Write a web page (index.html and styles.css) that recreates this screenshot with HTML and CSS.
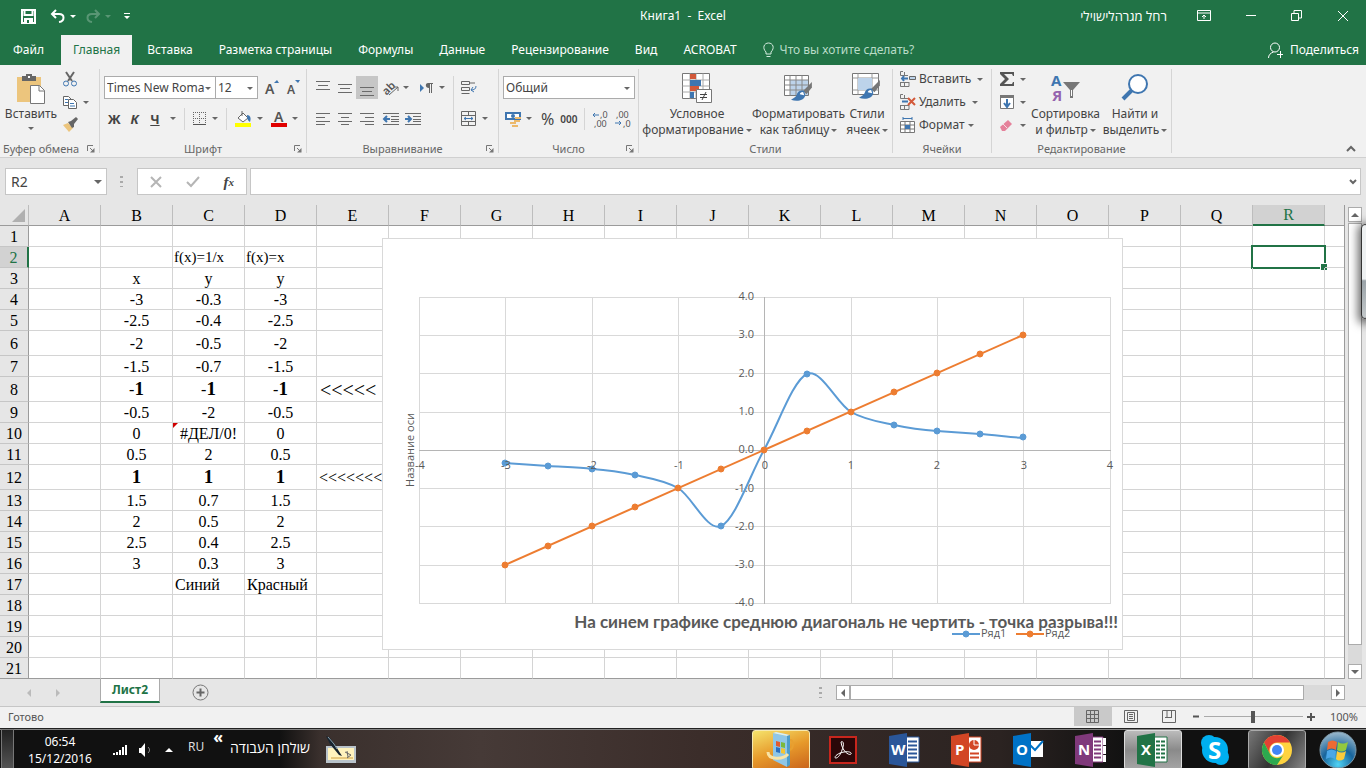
FILE: index.html
```html
<!DOCTYPE html>
<html lang="ru">
<head>
<meta charset="utf-8">
<title>Книга1 - Excel</title>
<link rel="stylesheet" href="styles.css">
</head>
<body>
<svg width="0" height="0" class="defs" aria-hidden="true">
  <symbol id="launch" viewBox="0 0 8 8"><path d="M.5 6V.5H6M3 3l3 3" stroke="#777" fill="none"/><path d="M7.500 3v4.500H3z" fill="#777"/></symbol>
  <symbol id="brush" viewBox="0 0 20 18"><path d="M19 0l-8 8 3 3 5-6z" fill="#777"/><path d="M12 8c-4-1-6 1-7 4-1 2-3 3-5 4 5 2 12 1 13-4z" fill="#3f76b0"/><path d="M11 9c-2 0-3 1-3 2l4 1z" fill="#fff"/></symbol>
  <symbol id="cells" viewBox="0 0 10 16"><path d="M3 .5H.5v4H8M.5 11v4.500H9V11M.5 11.500H9M4.500 11v4M4.500 1v3" stroke="#777" fill="none"/></symbol>
</svg>

<header class="titlebar">
  <div class="quick">
    <button aria-label="Сохранить"><svg width="15" height="15"><path d="M1 1h13v13H1zM3.500 1v5h8V1M4 14v-4h7v4" fill="none" stroke="#fff" stroke-width="2"/><path d="M4 10h7v4H4z" fill="#fff"/><path d="M6 11h2v3H6z" fill="#217346"/></svg></button>
    <button class="split" aria-label="Отменить"><svg width="16" height="14"><path d="M6 1L2 5l4 4M2 5h7c6 0 6 7 0 8" fill="none" stroke="#fff" stroke-width="2"/></svg><i class="caret"></i></button>
    <button class="split dim" aria-label="Вернуть"><svg width="16" height="14"><path d="M10 1l4 4-4 4M14 5H7c-6 0-6 7 0 8" fill="none" stroke="#fff" stroke-width="2"/></svg><i class="caret"></i></button>
    <button aria-label="Настройка панели"><svg width="6" height="7"><path d="M0 0h6v1H0zM0 3h6L3 6z" fill="#fff"/></svg></button>
  </div>
  <h1>Книга1&nbsp; -&nbsp; Excel</h1>
  <div class="window">
    <span class="user" dir="rtl">רחל מגרהלישוילי</span>
    <button aria-label="Параметры ленты"><svg width="14" height="12"><path d="M.5.5h13v10H.5zM.5 3h13M7 9V5M5 7l2-2 2 2" fill="none" stroke="#fff"/></svg></button>
    <button aria-label="Свернуть"><svg width="12" height="12"><path d="M1 5.500h10" stroke="#fff"/></svg></button>
    <button aria-label="Восстановить"><svg width="12" height="12"><path d="M.5 3.500h7v7h-7zM3 3V.5h7.500V8H8" fill="none" stroke="#fff"/></svg></button>
    <button aria-label="Закрыть"><svg width="12" height="12"><path d="M1 1l10 10M11 1L1 11" stroke="#fff"/></svg></button>
  </div>
</header>

<nav class="tabs">
  <button>Файл</button><button class="active">Главная</button><button>Вставка</button><button>Разметка страницы</button><button>Формулы</button><button>Данные</button><button>Рецензирование</button><button>Вид</button><button>ACROBAT</button>
  <button class="tell"><svg width="11" height="16"><path d="M3 10C-1 6 1 1 5.500 1S12 6 8 10v2H3zM3.500 14.500h4" fill="none" stroke="#d5ecdf"/></svg>Что вы хотите сделать?</button>
  <button class="share"><svg width="16" height="17"><circle cx="7" cy="5.500" r="4.500" fill="none" stroke="#fff"/><path d="M.5 16c0-3 2-5 5-6M9 12.500h6M12.500 9v7" fill="none" stroke="#fff"/></svg>Поделиться</button>
</nav>

<section class="ribbon">
  <div class="group g-clip">
    <div class="body">
      <button class="big paste"><svg width="30" height="31"><path d="M1 4h24v25H1z" fill="#ecc57d"/><path d="M6 3h4V1h6v2h4v5H6z" fill="#666"/><path d="M12 3h2v2h-2z" fill="#fff"/><path d="M14.500 12.500h9l5 5v13h-14z" fill="#fff" stroke="#777"/><path d="M23 12.500V18h5.500" fill="none" stroke="#777"/></svg><span>Вставить</span><i class="caret"></i></button>
      <div class="stack">
        <button aria-label="Вырезать"><svg width="16" height="16"><path d="M4 1l6 9M12 1L6 10" stroke="#666" stroke-width="2"/><circle cx="4" cy="12.500" r="2.500" fill="none" stroke="#3f76b0"/><circle cx="12" cy="12.500" r="2.500" fill="none" stroke="#3f76b0"/></svg></button>
        <button aria-label="Копировать"><svg width="16" height="16"><path d="M1.500 2.500h5l3 3v6h-8z" fill="#fff" stroke="#666"/><path d="M6.500 5.500h5l3 3v6h-8z" fill="#fff" stroke="#666"/><path d="M3 5.500h3M3 8.500h3M8 9.500h4M8 12h5" stroke="#3f76b0"/></svg><i class="caret"></i></button>
        <button aria-label="Формат по образцу"><svg width="16" height="16"><path d="M1 8l5-2 5 5-4 4z" fill="#ecc57d"/><path d="M6 5l3-1 5-4 2 2-4 5v3l-2 1z" fill="#666"/></svg></button>
      </div>
    </div>
    <footer>Буфер обмена<svg class="launch"><use href="#launch"/></svg></footer>
  </div>

  <div class="group g-font">
    <div class="body rows">
      <div class="row">
        <label class="pick font"><select aria-label="Шрифт"><option>Times New Roma</option></select></label><label class="pick size"><select aria-label="Размер"><option>12</option></select></label>
        <button class="grow" aria-label="Увеличить размер"><svg width="15" height="20"><text x="0" y="16" class="glyph g14">A</text><path d="M9 5h5l-2-3z" fill="#3f76b0"/></svg></button>
        <button class="grow" aria-label="Уменьшить размер"><svg width="15" height="20"><text x="0" y="16" class="glyph g12">A</text><path d="M8 2h5l-2 3z" fill="#3f76b0"/></svg></button>
      </div>
      <div class="row second">
        <button class="letter b">Ж</button><button class="letter i">К</button><button class="letter u">Ч</button><i class="caret"></i><i class="rule"></i>
        <button aria-label="Границы"><svg width="14" height="14"><path d="M.5 0v13M6.500 0v13M12.500 0v13M0 .5h13M0 6.500h13" stroke="#666" stroke-dasharray="1 1"/><path d="M0 12.500h13" stroke="#555"/></svg></button><i class="caret"></i><i class="rule"></i>
        <button aria-label="Цвет заливки"><svg width="17" height="16"><path d="M3 7l5-5 5 5-5 4zM7 5V0" fill="#fff" stroke="#666"/><path d="M12 4c4 0 4 4 3 7-2-1-3-3-3-7" fill="#3f76b0"/><path d="M0 12h16v4H0z" fill="#ff0"/></svg></button><i class="caret"></i>
        <button aria-label="Цвет текста"><svg width="16" height="20"><text x="3" y="13" class="glyph g14">A</text><path d="M0 14h16v4H0z" fill="#e00000"/></svg></button><i class="caret"></i>
      </div>
    </div>
    <footer>Шрифт<svg class="launch"><use href="#launch"/></svg></footer>
  </div>

  <div class="group g-align">
    <div class="body">
      <div class="rows">
        <div class="row">
          <button class="al" aria-label="По верхнему краю"><svg width="16" height="16"><path d="M1 1.500h14M3 5.500h10M1 9.500h14" stroke="#6a6a6a"/></svg></button>
          <button class="al" aria-label="По середине"><svg width="16" height="16"><path d="M1 4.500h14M3 8.500h10M1 12.500h14" stroke="#6a6a6a"/></svg></button>
          <button class="al on" aria-label="По нижнему краю"><svg width="16" height="16"><path d="M1 7.500h14M3 11.500h10M1 15.500h14" stroke="#6a6a6a"/></svg></button>
          <button class="al far" aria-label="Ориентация"><svg width="17" height="16"><text x="0" y="13" class="glyph g11" transform="rotate(-45 5 10)">ab</text><path d="M6 15l9-8M11 7h4v4" fill="none" stroke="#666"/></svg></button><i class="caret"></i>
          <button class="al far" aria-label="Направление"><svg width="14" height="14"><path d="M0 3l4 4-4 4z" fill="#3f76b0"/><path d="M8 2h5v1h-1v9h-1V3h-1v9H9V7C5 7 5 2 8 2" fill="#666"/></svg></button><i class="caret"></i>
        </div>
        <div class="row second">
          <button class="al" aria-label="По левому краю"><svg width="16" height="14"><path d="M1 1.500h14M1 5.500h9M1 9.500h14M1 12.500h9" stroke="#6a6a6a"/></svg></button>
          <button class="al" aria-label="По центру"><svg width="16" height="14"><path d="M1 1.500h14M4 5.500h8M1 9.500h14M4 12.500h8" stroke="#6a6a6a"/></svg></button>
          <button class="al" aria-label="По правому краю"><svg width="16" height="14"><path d="M1 1.500h14M6 5.500h9M1 9.500h14M6 12.500h9" stroke="#6a6a6a"/></svg></button>
          <button class="al far" aria-label="Уменьшить отступ"><svg width="17" height="14"><path d="M0 1.500h16M8 4.500h8M8 7.500h8M8 9.500h8M0 12.500h16" stroke="#6a6a6a"/><path d="M7 7H1M4 4L1 7l3 3" fill="none" stroke="#3f76b0" stroke-width="2"/></svg></button>
          <button class="al" aria-label="Увеличить отступ"><svg width="17" height="14"><path d="M0 1.500h16M8 4.500h8M8 7.500h8M8 9.500h8M0 12.500h16" stroke="#6a6a6a"/><path d="M0 7h6M3 4l3 3-3 3" fill="none" stroke="#3f76b0" stroke-width="2"/></svg></button>
        </div>
      </div>
      <i class="rule tall"></i>
      <div class="rows">
        <div class="row"><button aria-label="Перенести текст"><svg width="17" height="16"><path d="M.5 1.500h8v3h-8zM8 3h6M.5 7.500h8v3h-8zM.5 13.500h8" fill="none" stroke="#666"/><path d="M15 6c0 3-2 4-5 4M12 7l-2 3 3 2" fill="none" stroke="#3f76b0"/></svg></button></div>
        <div class="row second"><button aria-label="Объединить"><svg width="16" height="16"><path d="M.5.5h14v14H.5zM.5 4.500h14M.5 10.500h14M7.500.5v4M7.500 10.500v4" fill="none" stroke="#666"/><path d="M3 7.500h9M5 6L3 7.500 5 9M10 6l2 1.500L10 9" fill="none" stroke="#3f76b0"/></svg></button><i class="caret"></i></div>
      </div>
    </div>
    <footer>Выравнивание<svg class="launch"><use href="#launch"/></svg></footer>
  </div>

  <div class="group g-num">
    <div class="body rows">
      <div class="row"><label class="pick num"><select aria-label="Формат числа"><option>Общий</option></select></label></div>
      <div class="row second">
        <button class="money" aria-label="Финансовый формат"><svg width="17" height="16"><path d="M0 1h16v8H0z" fill="#3f76b0"/><path d="M2 3h12v4H2z" fill="#fff"/><circle cx="8" cy="5" r="2" fill="#3f76b0"/><path d="M10 6h6v2h-6zM9 9h6v2H9zM5 11h6v2H5zM7 14h6v2H7z" fill="#ecb96b"/></svg></button><i class="caret"></i>
        <button class="pct">%</button><button class="thou">000</button><i class="rule"></i>
        <button aria-label="Увеличить разрядность"><svg width="16" height="20"><text x="8" y="9" class="glyph g9">,0</text><text x="2" y="18" class="glyph g9">,00</text><path d="M7 6H1M3 4L1 6l2 2" fill="none" stroke="#3f76b0"/></svg></button>
        <button aria-label="Уменьшить разрядность"><svg width="16" height="20"><text x="1" y="9" class="glyph g9">,00</text><text x="8" y="18" class="glyph g9">,0</text><path d="M0 14h6M4 12l2 2-2 2" fill="none" stroke="#3f76b0"/></svg></button>
      </div>
    </div>
    <footer>Число<svg class="launch"><use href="#launch"/></svg></footer>
  </div>

  <div class="group g-style">
    <div class="body">
      <button class="big wide"><svg width="30" height="31"><path d="M.5.500h27v25H.5z" fill="#fff" stroke="#777"/><path d="M.5 7h27M.5 13h27M.5 19h27M8 .5v25M14 .5v25M21 .5v25" stroke="#aaa"/><path d="M8 1h6v5H8zM8 13h9v5H8z" fill="#d3593a"/><path d="M8 7h11v6H8zM8 19h4v6H8z" fill="#3f76b0"/><path d="M14.500 16.500h15v13h-15z" fill="#fff" stroke="#777"/><path d="M18 21.500h7M18 24.500h7M24 19l-4 8" stroke="#444"/></svg><span>Условное<br>форматирование<i class="caret"></i></span></button>
      <button class="big mid"><svg width="30" height="31"><path d="M.5 2.500h24v20H.5z" fill="#fff" stroke="#777"/><path d="M6 7h18v15H6z" fill="#bdd3ea"/><path d="M.5 7h24M.5 12h24M.5 17h24M6 2.500v20M12 2.500v20M18 2.500v20" stroke="#888"/><use href="#brush" x="7" y="9" width="22" height="20"/></svg><span>Форматировать<br>как таблицу<i class="caret"></i></span></button>
      <button class="big thin"><svg width="30" height="31"><path d="M.5.500h26v21H.5z" fill="#fff" stroke="#777"/><path d="M.5 5h26M.5 17h26M6 .5v21M20 .5v21" stroke="#999"/><path d="M6 5h14v12H6z" fill="#bdd3ea"/><use href="#brush" x="7" y="7" width="22" height="20"/></svg><span>Стили<br>ячеек<i class="caret"></i></span></button>
    </div>
    <footer>Стили</footer>
  </div>

  <div class="group g-cells">
    <div class="body stack">
      <button><svg width="16" height="16"><use href="#cells" width="10" height="16"/><path d="M9.500 5.500h6v3h-6z" fill="#bdd3ea" stroke="#666"/><path d="M8 7.500H2M4 5L2 7.500 4 10" fill="none" stroke="#3f76b0" stroke-width="2"/></svg>Вставить<i class="caret gap"></i></button>
      <button><svg width="16" height="16"><use href="#cells" width="10" height="16"/><path d="M2 7.500h6" stroke="#3f76b0" stroke-width="2"/><path d="M8 4l7 7M15 4l-7 7" stroke="#d3593a" stroke-width="2"/></svg>Удалить<i class="caret gap"></i></button>
      <button><svg width="16" height="16"><path d="M.5 4.500h14v11H.5zM.5 8h14M.5 12h14M5 5v10M10 5v10" fill="#fff" stroke="#777"/><path d="M5 8h5v4H5z" fill="#3f76b0"/><path d="M3 1.500h9M3 0v3M12 0v3" stroke="#3f76b0"/></svg>Формат<i class="caret"></i></button>
    </div>
    <footer>Ячейки</footer>
  </div>

  <div class="group g-edit">
    <div class="body">
      <div class="stack">
        <button aria-label="Сумма"><svg width="16" height="16"><path d="M1 1h14v4h-1l-1-2H5l5 5-5 5h8l1-2h1v4H1v-2l5-5-5-5z" fill="#555"/></svg><i class="caret"></i></button>
        <button aria-label="Заполнить"><svg width="16" height="16"><path d="M1.500 1.500h13v13h-13z" fill="#fff" stroke="#777"/><path d="M1 1h14v3H1z" fill="#777"/><path d="M8 5v8M5 9l3 4 3-4" fill="none" stroke="#3f76b0" stroke-width="2"/></svg><i class="caret"></i></button>
        <button aria-label="Очистить"><svg width="16" height="16"><path d="M1 10l8-7 4 4-7 7-3 0z" fill="#e5829b"/><path d="M4 7l4 4" stroke="#f5dde4"/></svg><i class="caret"></i></button>
      </div>
      <button class="big sort"><svg width="30" height="31"><text x="0" y="13" class="glyph az blue">А</text><text x="1" y="28" class="glyph az violet">Я</text><path d="M12 9h17l-7 8v8h-3v-8z" fill="#777"/><path d="M20 17h1v6h-1z" fill="#fff"/></svg><span>Сортировка<br>и фильтр<i class="caret"></i></span></button>
      <button class="big find"><svg width="30" height="31"><path d="M12 17l-9 9" stroke="#3f76b0" stroke-width="4"/><circle cx="18" cy="11" r="9" fill="#fff" stroke="#3f76b0" stroke-width="2"/></svg><span>Найти и<br>выделить<i class="caret"></i></span></button>
    </div>
    <footer>Редактирование</footer>
  </div>
  <button class="collapse" aria-label="Свернуть ленту"><svg width="10" height="7"><path d="M1 6l4-4 4 4" fill="none" stroke="#666" stroke-width="2"/></svg></button>
</section>

<section class="formula">
  <label class="pick name"><select aria-label="Имя"><option>R2</option></select></label>
  <span class="dots"></span>
  <div class="fx">
    <button aria-label="Отмена"><svg width="12" height="12"><path d="M1 1l10 10M11 1L1 11" stroke="#b5b5b5" stroke-width="2"/></svg></button>
    <button aria-label="Ввод"><svg width="14" height="12"><path d="M1 6l4 4 8-9" fill="none" stroke="#b5b5b5" stroke-width="2"/></svg></button>
    <button class="fn">f<sub>x</sub></button>
  </div>
  <div class="entry"><input type="text" aria-label="Строка формул"><svg width="10" height="8"><path d="M2 2l3 3 3-3" fill="none" stroke="#666" stroke-width="2"/></svg></div>
</section>

<main class="sheet">
  <div class="gridwrap">
    <table id="grid"></table>
    <svg class="chart" width="741" height="412" viewBox="0 0 741 412">
      <g class="lines" shape-rendering="crispEdges">
        <path d="M37 59H729M37 97H729M37 135H729M37 174H729M37 250H729M37 288H729M37 327H729M37 365H729M37 59V366M123 59V366M210 59V366M296 59V366M469 59V366M555 59V366M641 59V366M728 59V366"/>
        <path class="axis" d="M37 212H729M382 59V366"/>
      </g>
      <path class="blue-line" d="M123 225C137 226 152 227 166 228C180 229 196 229 210 231C224 232 239 234 253 237C267 240 282 242 296 250C310 258 325 294 339 288C353 282 368 237 382 212C396 187 411 142 425 136C439 130 455 166 469 174C483 182 498 184 512 187C526 190 541 192 555 193S584 195 598 196S627 199 641 200"/>
      <g class="blue-dot"><circle cx="123" cy="225" r="3"/><circle cx="166" cy="228" r="3"/><circle cx="210" cy="231" r="3"/><circle cx="253" cy="237" r="3"/><circle cx="339" cy="288" r="3"/><circle cx="425" cy="136" r="3"/><circle cx="512" cy="187" r="3"/><circle cx="555" cy="193" r="3"/><circle cx="598" cy="196" r="3"/><circle cx="641" cy="199" r="3"/></g>
      <path class="orange-line" d="M123 327L641 97"/>
      <g class="orange-dot"><circle cx="123" cy="327" r="3"/><circle cx="166" cy="308" r="3"/><circle cx="210" cy="288" r="3"/><circle cx="253" cy="269" r="3"/><circle cx="296" cy="250" r="3"/><circle cx="339" cy="231" r="3"/><circle cx="382" cy="212" r="3"/><circle cx="425" cy="193" r="3"/><circle cx="469" cy="174" r="3"/><circle cx="512" cy="154" r="3"/><circle cx="555" cy="135" r="3"/><circle cx="598" cy="116" r="3"/><circle cx="641" cy="97" r="3"/></g>
      <g class="tick end"><text x="372" y="62">4.0</text><text x="372" y="100">3.0</text><text x="372" y="139">2.0</text><text x="372" y="177">1.0</text><text x="372" y="215">0.0</text><text x="372" y="254">-1.0</text><text x="372" y="292">-2.0</text><text x="372" y="330">-3.0</text><text x="372" y="368">-4.0</text></g>
      <g class="tick mid"><text x="38" y="231">-4</text><text x="124" y="231">-3</text><text x="210" y="231">-2</text><text x="297" y="231">-1</text><text x="383" y="231">0</text><text x="469" y="231">1</text><text x="555" y="231">2</text><text x="642" y="231">3</text><text x="728" y="231">4</text><text transform="translate(32 212) rotate(-90)">Название оси</text></g>
      <text class="caption" x="736" y="390">На синем графике среднюю диагональ не чертить - точка разрыва!!!</text>
      <path class="blue-line" d="M570 396h28"/><circle class="blue-dot" cx="584" cy="396" r="3"/><text class="tick" x="599" y="399">Ряд1</text>
      <path class="orange-line" d="M634 396h28"/><circle class="orange-dot" cx="648" cy="396" r="3"/><text class="tick" x="663" y="399">Ряд2</text>
    </svg>
  </div>
  <div class="vscroll">
    <button aria-label="Вверх"><i class="tri up"></i></button><div class="thumb"></div><button aria-label="Вниз"><i class="tri down"></i></button>
  </div>
  <div class="gadget"></div>
</main>

<section class="sheetbar">
  <div class="navs"><i class="tri left"></i><i class="tri right"></i></div>
  <button class="leaf">Лист2</button>
  <button class="plus" aria-label="Новый лист"><svg width="17" height="17"><circle cx="8.500" cy="8.500" r="7.500" fill="none" stroke="#777"/><path d="M4.500 8.500h8M8.500 4.500v8" stroke="#666" stroke-width="2"/></svg></button>
  <span class="dots"></span>
  <div class="hscroll"><button aria-label="Влево"><i class="tri left"></i></button><div class="thumb"></div><button aria-label="Вправо"><i class="tri right"></i></button></div>
</section>

<section class="status">
  <span>Готово</span>
  <div class="views">
    <button class="on" aria-label="Обычный"><svg width="13" height="13"><path d="M.5.500h12v12H.5zM.5 4.500h12M.5 8.500h12M4.500.5v12M8.500.5v12" fill="none" stroke="#666"/></svg></button>
    <button aria-label="Разметка страницы"><svg width="14" height="13"><path d="M.5.500h13v12H.5zM3.500 2.500h7v8h-7zM5 4.500h4M5 6.500h4M5 8.500h4" fill="none" stroke="#666"/></svg></button>
    <button aria-label="Страничный режим"><svg width="14" height="13"><path d="M.5.500h13v12H.5zM5 .5v7M9.500.5v7M3 7.500h7" fill="none" stroke="#666"/></svg></button>
  </div>
  <button class="sign" aria-label="Уменьшить"><svg width="7" height="7"><path d="M0 3.500h6" stroke="#555" stroke-width="2"/></svg></button>
  <input class="zoom" type="range" aria-label="Масштаб" value="50">
  <button class="sign" aria-label="Увеличить"><svg width="8" height="8"><path d="M0 4h8M4 0v8" stroke="#555" stroke-width="2"/></svg></button>
  <span class="pc">100%</span>
</section>

<footer class="taskbar">
  <button class="desk" aria-label="Рабочий стол"></button>
  <div class="clock">06:54<br>15/12/2016</div>
  <svg class="net" width="16" height="12"><path d="M0 9h2v2H0zM3 8h2v3H3zM6 6h2v5H6zM9 3h2v8H9zM12 1h2v10h-2z" fill="#fff"/></svg>
  <svg class="vol" width="13" height="14"><path d="M0 5h2l4-5v14L2 10H0z" fill="#fff"/><path d="M9 4c2 2 2 4 0 6" fill="none" stroke="#999"/></svg>
  <i class="tri up white"></i>
  <span class="lang">RU</span><span class="chev">«</span><span class="heb" dir="rtl">שולחן העבודה</span>
  <svg class="pen" width="33" height="30"><path d="M1 11h30v17H1z" fill="#b9c3ca"/><path d="M3 13h26v12H3z" fill="#fff3bd"/><path d="M6 23h22" stroke="#d0a040"/><path d="M20 17l6 3-4 3M22 16l1 6" fill="none" stroke="#666"/><path d="M1 1l4 2 5 7 7 11-3-1L5 9z" fill="#16232e"/><path d="M3 2l6 7 3 5" stroke="#88a2b0" fill="none"/></svg>
  <div class="apps">
    <button class="explorer" aria-label="Проводник"><svg width="30" height="38"><path d="M7 2l14 3v31L7 29z" fill="#8fc6e6"/><path d="M7 2l3-1 14 3-3 1z" fill="#d5effb"/><path d="M21 5l3-1v30l-3 2z" fill="#4d9cc9"/><path d="M10 10l4 1v5l-4-1z" fill="#e25b2f"/><path d="M15 11l4 1v5l-4-1z" fill="#7bb93a"/><path d="M10 16l4 1v5l-4-1z" fill="#2b6fc0"/><path d="M15 17l4 1v5l-4-1z" fill="#f5c431"/><path d="M2 21c0 8 15 8 20 2" fill="none" stroke="#f8e3a5" stroke-width="3"/><path d="M24 9c4 0 4 8 0 10" fill="none" stroke="#e8a030" stroke-width="2"/></svg></button>
    <button aria-label="Acrobat"><svg width="30" height="34"><path d="M2 4h26v26H2z" fill="#2a0708" stroke="#c8261d" stroke-width="2"/><path d="M13 9c3-2 3 4 1 8-1 4-4 8-6 8-3 0 1-5 8-6 6-1 8 1 7 2-2 2-9-3-10-12z" fill="none" stroke="#fff" stroke-width="1"/></svg></button>
    <button aria-label="Word"><svg width="32" height="36"><path d="M16 5h14v25H16z" fill="#fff" stroke="#2a5699"/><path d="M19 9.500h9M19 13.500h9M19 17.500h9M19 21.500h9M19 25.500h9" stroke="#2a5699" stroke-width="2"/><path d="M0 4l18-3v34L0 32z" fill="#2a5699"/><text x="2" y="23" class="app-letter">W</text></svg></button>
    <button aria-label="PowerPoint"><svg width="32" height="36"><path d="M16 5h14v25H16z" fill="#fff" stroke="#d24625"/><circle cx="23" cy="13" r="5" fill="#d24625"/><path d="M23 8v5h5" fill="none" stroke="#fff"/><path d="M19 21.500h9M19 25.500h9" stroke="#d24625" stroke-width="2"/><path d="M0 4l18-3v34L0 32z" fill="#d24625"/><text x="4" y="23" class="app-letter">P</text></svg></button>
    <button aria-label="Outlook"><svg width="32" height="36"><path d="M16 9h14v16H16z" fill="#fff"/><path d="M17 13l5 5 8-9" fill="none" stroke="#0072c6" stroke-width="2"/><path d="M0 4l18-3v34L0 32z" fill="#0072c6"/><text x="3" y="23" class="app-letter">O</text></svg></button>
    <button aria-label="OneNote"><svg width="32" height="36"><path d="M16 5h12v25H16z" fill="#fff" stroke="#80397b"/><path d="M19 9.500h7M19 13.500h7M19 17.500h7M19 21.500h7M19 25.500h7" stroke="#80397b" stroke-width="2"/><path d="M28 6h3v7h-3zM28 14h3v8h-3zM28 23h3v7h-3z" fill="#fff"/><path d="M0 4l18-3v34L0 32z" fill="#80397b"/><text x="3" y="23" class="app-letter">N</text></svg></button>
    <button class="lit" aria-label="Excel"><svg width="32" height="36"><path d="M16 5h14v25H16z" fill="#fff" stroke="#217346"/><path d="M19 9.500h9M19 13.500h9M19 17.500h9M19 21.500h9M19 25.500h9" stroke="#217346" stroke-width="2"/><path d="M23.500 7v22" stroke="#fff"/><path d="M0 4l18-3v34L0 32z" fill="#217346"/><text x="4" y="23" class="app-letter">X</text></svg></button>
    <button aria-label="Skype"><svg width="32" height="34"><circle cx="16" cy="17" r="13" fill="#00aff0"/><circle cx="10" cy="10" r="8" fill="#00aff0"/><circle cx="22" cy="24" r="8" fill="#00aff0"/><text x="9" y="26" class="app-letter s">S</text></svg></button>
    <button class="smoke" aria-label="Chrome"><svg width="32" height="34"><circle cx="16" cy="17" r="15" fill="#ffd33f"/><path d="M3 9.500A15 15 0 0 1 29 9.500H16A8 8 0 0 0 9 21z" fill="#e34133"/><path d="M3 9.500A15 15 0 0 0 16 32l7-11a8 8 0 0 1-14 0z" fill="#2da94f"/><circle cx="16" cy="17" r="7" fill="#fff"/><circle cx="16" cy="17" r="5" fill="#4285f4"/></svg></button>
    <button class="start" aria-label="Пуск"><svg width="38" height="38"><defs><radialGradient id="orb" cx=".5" cy=".9" r=".9"><stop offset="0" stop-color="#4fd3f5"/><stop offset=".5" stop-color="#17649c"/><stop offset="1" stop-color="#9cb9cc"/></radialGradient></defs><circle cx="19" cy="19" r="18" fill="url(#orb)" stroke="#7d98a8"/><path d="M9 11c3-2 6-2 9 0l-1 8c-3-2-6-2-9 0z" fill="#ee6a32"/><path d="M19 11c3 2 6 2 10 0l-2 8c-3 2-6 2-9 0z" fill="#93c83e"/><path d="M8 20c3-2 6-2 9 0l-1 8c-3-2-6-2-9 0z" fill="#4aa7e8"/><path d="M18 20c3 2 6 2 9 0l-2 8c-3 2-6 2-8 0z" fill="#fbcb3b"/></svg></button>
  </div>
</footer>
<script src="grid.js"></script>
</body>
</html>
```

FILE: styles.css
```css
* { box-sizing: border-box; }
body { margin: 0; min-height: 100vh; display: flex; flex-direction: column; overflow: hidden; background: #e6e6e6; color: #444; font: 12px/16px "Noto Sans", "Open Sans", sans-serif; }
button { border: 0; background: none; padding: 0; margin: 0; font: inherit; color: inherit; display: flex; align-items: center; justify-content: center; white-space: nowrap; }
svg { display: block; flex: none; overflow: visible; }
.defs { position: absolute; }
.caret { flex: none; width: 0; height: 0; border: 3px solid transparent; border-top-color: #666; border-bottom: 0; }

.titlebar { height: 35px; background: #217346; color: #fff; display: grid; grid-template-columns: 1fr auto 1fr; align-items: center; padding-bottom: 3px; }
.titlebar h1 { margin: 0; font-size: 12px; font-weight: 400; }
.quick { display: flex; align-items: center; padding-left: 21px; gap: 14px; }
.quick .caret { border-top-color: #fff; margin-left: 4px; }
.quick .split { margin-right: -5px; }
.quick button:last-child { margin-left: 4px; }
.dim { opacity: .25; }
.window { display: flex; justify-content: flex-end; align-items: center; gap: 34px; padding-right: 17px; }
.user { font: 13px/16px "Open Sans", "DejaVu Sans", sans-serif; margin-right: -4px; }

.tabs { height: 30px; background: #217346; color: #fff; display: flex; align-items: stretch; }
.tabs button { padding: 0 13px; }
.tabs .active { background: #f1f1f1; color: #217346; padding: 0 12px; margin: 0 2px 0 4px; }
.tabs .tell { color: #b9dcc8; gap: 6px; }
.tabs .share { margin-left: auto; gap: 6px; padding: 0 7px; }

.ribbon { height: 93px; background: #f1f1f1; border-bottom: 1px solid #d0d0d0; display: flex; padding: 4px 0; position: relative; }
.group { border-right: 1px solid #d5d5d5; display: flex; flex-direction: column; justify-content: space-between; }
.group footer { height: 16px; text-align: center; color: #666; margin-bottom: -4px; position: relative; white-space: nowrap; font-size: 11px; }
.launch { position: absolute; right: 4px; bottom: 4px; width: 8px; height: 8px; }
.body { display: flex; color: #444; }
.g-clip { width: 100px; }
.g-clip footer { text-align: left; padding-left: 3px; }
.g-font { width: 207px; }
.g-align { width: 192px; }
.g-num { width: 140px; }
.g-style { width: 254px; }
.g-cells { width: 99px; }
.g-edit { width: 180px; }
.big { flex-direction: column; justify-content: flex-start; padding-top: 4px; line-height: 16px; }
.big svg { margin-bottom: 2px; }
.big span .caret { display: inline-block; vertical-align: middle; margin-left: 2px; }
.paste { width: 62px; }
.paste .caret { margin-top: 5px; }
.stack { display: flex; flex-direction: column; gap: 7px; padding-top: 2px; }
.stack button { justify-content: flex-start; gap: 5px; height: 16px; }
.rows { display: flex; flex-direction: column; padding-top: 7px; gap: 8px; }
.row { display: flex; height: 23px; align-items: center; }
.rule { width: 1px; height: 22px; background: #d5d5d5; }
.rule.tall { height: 54px; margin: 7px 7px 0 3px; }

.pick { position: relative; display: block; height: 23px; background: #fff; border: 1px solid #ababab; }
.pick::after { content: ""; position: absolute; right: 4px; top: 10px; border: 3px solid transparent; border-top-color: #666; border-bottom: 0; }
.pick select { appearance: none; width: 100%; height: 100%; border: 0; background: none; padding: 0 10px 0 2px; font: inherit; color: #444; }
.g-font .row { padding-left: 4px; }
.pick.font { width: 112px; }
.pick.size { width: 43px; margin-left: -1px; }
.pick.num { width: 132px; margin-left: 4px; }
.grow { margin-left: 7px; }
.glyph { font-family: "Noto Sans", sans-serif; fill: #555; font-weight: 600; }
.g14 { font-size: 14px; } .g12 { font-size: 12px; } .g11 { font-size: 11px; } .g9 { font-size: 9px; font-weight: 400; }
.az { font-size: 15px; font-weight: 700; }
.az.blue { fill: #3f76b0; } .az.violet { fill: #9563ae; }
.letter { width: 22px; font-size: 13px; font-weight: 700; }
.letter.i { font-style: italic; }
.letter.u { text-decoration: underline; }
.g-font .second .caret { margin: 0 8px 0 5px; }
.g-font .second .rule + button { margin-left: 8px; }
.g-align .row { padding-left: 5px; }
.g-align .rows + .rule + .rows .row { padding-left: 0; }
.al { width: 22px; height: 23px; }
.al.on { background: #c6c6c6; }
.al.far { margin-left: 2px; }
.g-align .al + .caret { margin: 0 5px 0 1px; }
.g-align .row > button:not(.al) + .caret { margin-left: 5px; }
.money { margin: 0 4px 0 6px; }
.pct { font-size: 16px; margin-left: 9px; }
.thou { font-size: 10px; font-weight: 600; margin: 0 7px 0 6px; }
.g-num .rule + button { margin: 0 7px; }
.wide { width: 116px; }
.mid { width: 87px; }
.thin { width: 50px; }
.g-cells .stack { padding-left: 7px; gap: 7px; }
.g-cells .stack button { gap: 3px; }
.g-cells .stack .gap { margin-left: 3px; }
.g-edit .stack { padding-left: 7px; }
.sort { width: 77px; margin-left: 1px; }
.find { width: 62px; }
.collapse { margin: auto 10px 0 auto; height: 10px; }

.formula { display: flex; height: 47px; padding: 10px 5px 10px 5px; }
.pick.name { width: 102px; height: 27px; border-color: #c6c6c6; font-size: 14px; }
.pick.name::after { top: 11px; border-width: 4px 4px 0; }
.pick.name select { padding-left: 5px; }
.dots { width: 3px; height: 11px; margin: 8px 14px 8px 13px; background: repeating-linear-gradient(#aaa 0 2px, transparent 2px 5px); flex: none; }
.fx { width: 110px; background: #fff; border: 1px solid #c6c6c6; display: flex; align-items: center; justify-content: space-around; }
.fn { font: italic 700 15px/20px "Liberation Serif", serif; }
.fn sub { font-size: 11px; line-height: 8px; }
.entry { flex: 1; margin-left: 3px; background: #fff; border: 1px solid #c6c6c6; display: flex; align-items: center; padding-right: 2px; }
.entry input { flex: 1; border: 0; outline: 0; background: none; font: inherit; }

.sheet { display: flex; position: relative; }
.gridwrap { flex: 1; position: relative; overflow: hidden; }
table { width: 100%; table-layout: fixed; border-collapse: separate; border-spacing: 0; font: 16px/20px "Liberation Serif", serif; color: #000; background: #fff; border-right: 1px solid #9b9b9b; }
col { width: 72px; }
col.head { width: 29px; }
col.rest { width: auto; }
td { border: solid #d4d4d4; border-width: 0 1px 1px 0; padding: 1px 0 0; height: 21px; line-height: 19px; text-align: center; vertical-align: bottom; white-space: nowrap; position: relative; }
td:last-child { border-right: 0; }
tr:last-child td, tr:last-child th { border-bottom-color: #9b9b9b; }
tr.tall td, tr.tall th { height: 25px; }
tr.tall td { line-height: 22px; }
th { background: #e6e6e6; font-weight: 400; line-height: 19px; padding: 0; height: 21px; border: solid #ababab; border-width: 0 1px 1px 0; color: #000; }
thead th { border-bottom-color: #9b9b9b; border-right-color: #bdbdbd; }
thead th:last-child { border-right: 0; }
tbody th { border-right-color: #9b9b9b; border-bottom-color: #c6c6c6; }
thead th.hot { background: #d2d2d2; color: #217346; border-bottom: 2px solid #217346; }
tbody th.hot { background: #d2d2d2; color: #217346; border-right: 2px solid #217346; }
th .corner { display: block; margin: 1px 3px 0 auto; width: 0; height: 0; border: solid transparent; border-width: 13px 0 0 13px; border-bottom: 13px solid #b0b0b0; border-top: 0; }
td.left { text-align: left; padding-left: 2px; }
td.small { font-size: 15px; padding-left: 1px; }
td.bold b { font-size: 19px; }
td.arrow { font-size: 20px; padding-left: 3px; }
td.err::before { content: ""; position: absolute; left: 0; top: 0; border: solid transparent; border-width: 0 5px 5px 0; border-left: 0; border-top: 5px solid #d00000; border-bottom: 0; }
td.sel::before { content: ""; position: absolute; inset: -2px; border: 2px solid #217346; }
td.sel::after { content: ""; position: absolute; right: -3px; bottom: -3px; width: 6px; height: 6px; background: #217346; border: solid #fff; border-width: 1px 0 0 1px; }

.chart { position: absolute; left: 382px; top: 33px; background: #fff; outline: 1px solid #d9d9d9; outline-offset: -1px; }
.lines path { stroke: #d9d9d9; fill: none; }
.lines .axis { stroke: #b5b5b5; }
.tick { font: 11px "Open Sans", sans-serif; fill: #595959; }
.end { text-anchor: end; }
.tick.mid { text-anchor: middle; }
.caption { font: 700 17px Lato, "Open Sans", sans-serif; fill: #595959; text-anchor: end; }
.blue-line { fill: none; stroke: #5b9bd5; stroke-width: 2; }
.orange-line { fill: none; stroke: #ed7d31; stroke-width: 2; }
.blue-dot { fill: #5b9bd5; stroke: #5b9bd5; }
.orange-dot { fill: #ed7d31; stroke: #ed7d31; }

.vscroll { width: 14px; margin: 2px 4px 0 3px; display: flex; flex-direction: column; background: #dadada; }
.vscroll button, .hscroll button { width: 14px; height: 15px; background: #fff; border: 1px solid #ababab; flex: none; }
.vscroll .thumb { flex: 1; background: #fff; border: 1px solid #ababab; margin: 1px 0 19px; }
.tri { width: 0; height: 0; border: 4px solid transparent; flex: none; }
.tri.up { border-bottom-color: #666; border-top: 0; }
.tri.down { border-top-color: #666; border-bottom: 0; }
.tri.left { border-right-color: #666; border-left: 0; }
.tri.right { border-left-color: #666; border-right: 0; }
.white.up { border-bottom-color: #fff; }
.gadget { position: absolute; right: -3px; top: 19px; width: 8px; height: 95px; border: 1px solid #333; border-radius: 5px; background: linear-gradient(#eef1f2 58%, #9aa3a8 60%, #c3c8ca); box-shadow: 0 2px 10px 3px rgba(0, 0, 0, .6); }

.sheetbar { display: flex; height: 27px; }
.navs { width: 100px; display: flex; align-items: center; padding-left: 27px; gap: 25px; }
.navs .left { border-right-color: #bbb; }
.navs .right { border-left-color: #bbb; }
.leaf { width: 60px; height: 25px; background: #fff; border: 1px solid #ababab; border-width: 0 1px; border-bottom: 2px solid #217346; color: #217346; font-weight: 700; margin-top: -1px; }
.plus { margin-left: 32px; }
.sheetbar .dots { margin-left: auto; }
.hscroll { width: 509px; height: 15px; margin: 6px 21px 0 0; display: flex; background: #dadada; }
.hscroll .thumb { flex: 1; background: #fff; border: 1px solid #ababab; margin-right: 27px; }

.status { height: 22px; background: #f1f1f1; border-top: 1px solid #c6c6c6; display: flex; align-items: center; padding: 0 8px 2px; font-size: 11px; color: #555; }
.views { display: flex; margin-left: auto; align-self: stretch; margin-right: 5px; }
.views button { width: 38px; }
.views .on { background: #c9c9c9; }
.sign { width: 8px; }
.zoom { appearance: none; width: 99px; height: 12px; margin: 0 4px 0 3px; background: linear-gradient(#aaa, #aaa) center / 100% 1px no-repeat; }
.zoom::-webkit-slider-thumb { appearance: none; width: 4px; height: 12px; background: #555; }
.pc { margin-left: 15px; }

.taskbar { flex: 1; min-height: 40px; border-top: 1px solid #222; box-shadow: inset 0 1px #858585; background: linear-gradient(90deg, #111 280px, #3a302d 320px, #463a37 480px, #3b2d2a 700px, #2b2321 1000px, #111 1130px); color: #fff; display: flex; align-items: center; }
.desk { width: 13px; align-self: stretch; margin-left: 1px; border: 1px solid #777; background: linear-gradient(#222, #555); }
.clock { width: 92px; text-align: center; line-height: 17px; }
.net { margin-left: 7px; }
.vol { margin: 0 13px 0 10px; }
.lang { margin-left: 15px; margin-bottom: 6px; color: #ddd; }
.chev { margin: 0 7px 25px 9px; font-size: 16px; font-weight: 700; }
.heb { font: 14px/18px "Open Sans", "DejaVu Sans", sans-serif; margin-bottom: 4px; }
.pen { margin-left: 15px; }
.apps { margin: 0 0 0 auto; display: flex; gap: 4px; align-self: stretch; }
.apps button { width: 58px; border-radius: 3px; margin-top: 1px; }
.apps .explorer { background: linear-gradient(160deg, #f5e36c, #e79a2b 50%, #c9631b); border: 1px solid #f7e9b0; }
.apps .lit { background: linear-gradient(#bbb, #8a8a8a 50%, #a5a5a5); border: 1px solid #ddd; }
.apps .smoke { background: linear-gradient(120deg, #777, #333 50%, #888); border: 1px solid #aaa; }
.apps .start { width: 56px; }
.app-letter { font: 700 15px "Open Sans", sans-serif; fill: #fff; }
.app-letter.s { font-size: 24px; }
```

FILE: grid.js
```js
const letters = "ABCDEFGHIJKLMNOPQR".split("");
const tall = [6, 8, 12];
const cells = {
  C2: ["f(x)=1/x", "left small"], D2: ["f(x)=x", "left small"],
  B3: ["x"], C3: ["y"], D3: ["y"],
  E8: ["&lt;&lt;&lt;&lt;&lt;", "left arrow"], E12: ["&lt;&lt;&lt;&lt;&lt;&lt;&lt;", "left"],
  C17: ["Синий", "left"], D17: ["Красный", "left"], R2: ["", "sel"]
};
const inverse = ["-0.3", "-0.4", "-0.5", "-0.7", "-1", "-2", "#ДЕЛ/0!", "2", "1", "0.7", "0.5", "0.4", "0.3"];
inverse.forEach((value, i) => {
  const x = (i - 6) / 2;
  const row = i + 4;
  const strong = Math.abs(x) === 1;
  const show = v => strong ? [String(v).replace("1", "<b>1</b>"), "bold"] : [v];
  cells["B" + row] = show(x);
  cells["C" + row] = x === 0 ? [value, "err"] : show(value);
  cells["D" + row] = show(x);
});

let html = '<colgroup><col class="head">' + "<col>".repeat(18) + '<col class="rest"></colgroup><thead><tr><th><span class="corner"></span></th>';
html += letters.map(l => `<th class="${l === "R" ? "hot" : ""}">${l}</th>`).join("") + "<th></th></tr></thead><tbody>";
for (let r = 1; r <= 21; r++) {
  html += `<tr class="${tall.includes(r) ? "tall" : ""}"><th class="${r === 2 ? "hot" : ""}">${r}</th>`;
  html += letters.map(l => {
    const [text, cls] = cells[l + r] || ["", ""];
    return `<td class="${cls || ""}">${text}</td>`;
  }).join("") + "<td></td></tr>";
}
document.getElementById("grid").innerHTML = html + "</tbody>";
```
